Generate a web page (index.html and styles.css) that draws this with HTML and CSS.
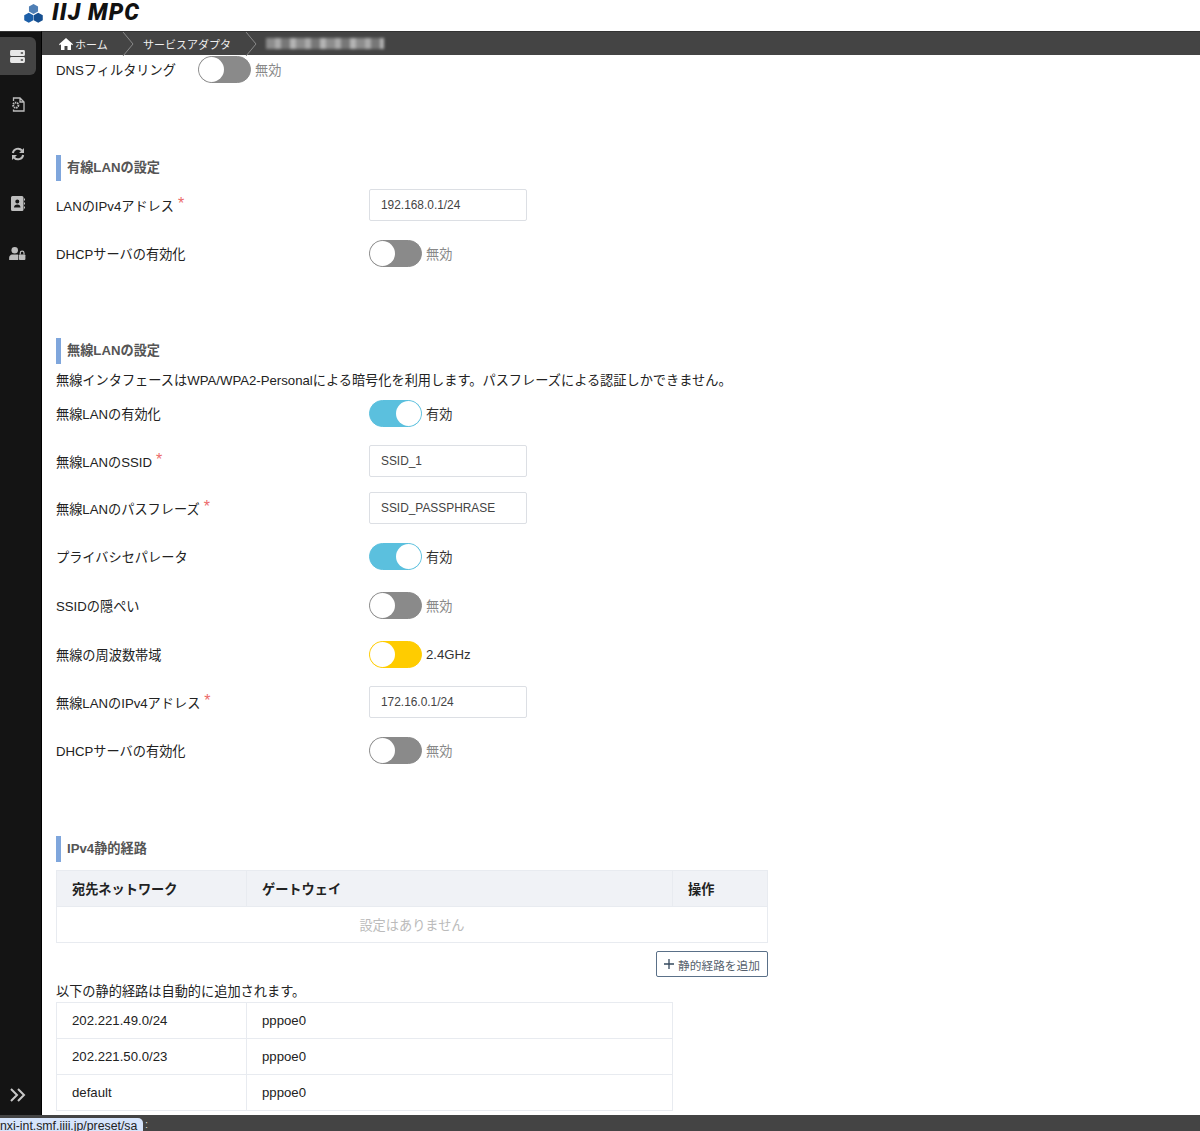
FILE: index.html
```html
<!DOCTYPE html>
<html lang="ja">
<head>
<meta charset="utf-8">
<title>IIJ MPC</title>
<link rel="stylesheet" href="styles.css">
</head>
<body>
<header class="topbar">
  <svg class="logo-mark" viewBox="0 0 22 22" width="21" height="20" aria-hidden="true">
    <path fill="#4f7fb5" d="M11 1l5 2.800v5.600l-5 2.800-5-2.800V3.800z"/>
    <path fill="#1c5fa8" d="M5.800 10.800l5 2.800v5.500l-5 2.700-5-2.700v-5.500z"/>
    <path fill="#164f90" d="M16.200 10.800l5 2.800v5.500l-5 2.700-5-2.700v-5.500z"/>
  </svg>
  <span class="logo-text">IIJ MPC</span>
</header>
<div class="shell">
  <nav class="side">
    <a class="side-item side-active">
      <svg viewBox="0 0 16 14" width="15" height="13"><path fill="#e8e8e8" d="M1.500 0h13A1.500 1.500 0 0 1 16 1.500V5a1.500 1.500 0 0 1-1.500 1.500h-13A1.500 1.500 0 0 1 0 5V1.500A1.500 1.500 0 0 1 1.500 0zm0 7.500h13A1.500 1.500 0 0 1 16 9v3.500a1.500 1.500 0 0 1-1.500 1.500h-13A1.500 1.500 0 0 1 0 12.500V9a1.500 1.500 0 0 1 1.500-1.500z"/><path fill="#444" d="M11.500 2.500h2.500v1.500h-2.500zM11.500 10h2.500v1.500h-2.500z"/></svg>
    </a>
    <a class="side-item">
      <svg viewBox="0 0 14 15" width="14" height="15"><path fill="none" stroke="#bdbdbd" stroke-width="1.300" d="M2.500 4V1h6.500L13 5v9H2.500v-1.500M9 1v4h4"/><circle cx="4.800" cy="8.200" r="2.600" fill="none" stroke="#bdbdbd" stroke-width="1.900" stroke-dasharray="1.500 .7"/></svg>
    </a>
    <a class="side-item">
      <svg viewBox="0 0 14 14" width="14" height="14"><path fill="none" stroke="#bdbdbd" stroke-width="2" d="M1.800 6A5.300 5.300 0 0 1 11 3.500M12.200 8A5.300 5.300 0 0 1 3 10.500"/><path fill="#bdbdbd" d="M13 1v5H8zM1 13V8h5z"/></svg>
    </a>
    <a class="side-item">
      <svg viewBox="0 0 14 15" width="14" height="15"><path fill="#bdbdbd" fill-rule="evenodd" d="M1.500 0h9.500A1.500 1.500 0 0 1 12.500 1.500v12A1.500 1.500 0 0 1 11 15H1.500A1.500 1.500 0 0 1 0 13.500v-12A1.500 1.500 0 0 1 1.500 0zM6.300 3.500a2 2 0 1 0 0 4 2 2 0 0 0 0-4zM3 11.500h6.500c0-2-1.300-3-3.200-3S3 9.500 3 11.500z"/><path fill="#bdbdbd" d="M13 2.500h1v2h-1zM13 6.500h1v2h-1zM13 10.500h1v2h-1z"/></svg>
    </a>
    <a class="side-item">
      <svg viewBox="0 0 18 14" width="17" height="13"><circle cx="6" cy="3.500" r="3.500" fill="#bdbdbd"/><path fill="#bdbdbd" d="M0 14v-2.500C0 9 2 8 4 8h4c1 0 1.500.2 1.800.4V14z"/><path fill="none" stroke="#bdbdbd" stroke-width="1.300" d="M12 8V6.500a2 2 0 0 1 4 0V8"/><path fill="#bdbdbd" d="M11.500 8h5a1 1 0 0 1 1 1v4a1 1 0 0 1-1 1h-5a1 1 0 0 1-1-1V9a1 1 0 0 1 1-1z"/></svg>
    </a>
    <a class="side-expand">
      <svg viewBox="0 0 16 14" width="16" height="14"><path fill="none" stroke="#c8c8c8" stroke-width="2" d="M1 1l6 6-6 6M8 1l6 6-6 6"/></svg>
    </a>
  </nav>
  <div class="main">
    <div class="crumbs">
      <span class="crumb crumb-home">
        <svg viewBox="0 0 14 12" width="14" height="12"><path fill="#fff" d="M7 0l7 6.300-.8.900L12 6.200V12H8.500V8h-3v4H2V6.200L.8 7.200 0 6.300z"/></svg>
        ホーム
      </span>
      <svg class="chev" viewBox="0 0 12 24" width="12" height="24"><path fill="none" stroke="#8a8a8a" d="M1 0l10 12L1 24"/></svg>
      <span class="crumb crumb-service">サービスアダプタ</span>
      <svg class="chev" viewBox="0 0 12 24" width="12" height="24"><path fill="none" stroke="#8a8a8a" d="M1 0l10 12L1 24"/></svg>
      <span class="crumb-blur"></span>
    </div>
    <main class="content">
      <div class="dns-row">
        <span class="dns-label">DNSフィルタリング</span>
        <span class="toggle off"><i></i></span><span class="state">無効</span>
      </div>

      <h2 class="heading h-wired">有線LANの設定</h2>
      <div class="row r-input r-first">
        <label>LANのIPv4アドレス<em>*</em></label>
        <span class="input">192.168.0.1/24</span>
      </div>
      <div class="row r-toggle">
        <label>DHCPサーバの有効化</label>
        <span class="toggle off"><i></i></span><span class="state">無効</span>
      </div>

      <h2 class="heading h-wifi">無線LANの設定</h2>
      <p class="desc">無線インタフェースはWPA/WPA2-Personalによる暗号化を利用します。パスフレーズによる認証しかできません。</p>
      <div class="row r-toggle r-wifi-first">
        <label>無線LANの有効化</label>
        <span class="toggle on"><i></i></span><span class="state active">有効</span>
      </div>
      <div class="row r-input">
        <label>無線LANのSSID<em>*</em></label>
        <span class="input">SSID_1</span>
      </div>
      <div class="row r-input">
        <label>無線LANのパスフレーズ<em>*</em></label>
        <span class="input">SSID_PASSPHRASE</span>
      </div>
      <div class="row r-toggle">
        <label>プライバシセパレータ</label>
        <span class="toggle on"><i></i></span><span class="state active">有効</span>
      </div>
      <div class="row r-toggle">
        <label>SSIDの隠ぺい</label>
        <span class="toggle off"><i></i></span><span class="state">無効</span>
      </div>
      <div class="row r-toggle">
        <label>無線の周波数帯域</label>
        <span class="toggle band"><i></i></span><span class="state active">2.4GHz</span>
      </div>
      <div class="row r-input">
        <label>無線LANのIPv4アドレス<em>*</em></label>
        <span class="input">172.16.0.1/24</span>
      </div>
      <div class="row r-toggle">
        <label>DHCPサーバの有効化</label>
        <span class="toggle off"><i></i></span><span class="state">無効</span>
      </div>

      <h2 class="heading h-routes">IPv4静的経路</h2>
      <table class="grid routes">
        <thead>
          <tr><th class="c1">宛先ネットワーク</th><th class="c2">ゲートウェイ</th><th class="c3">操作</th></tr>
        </thead>
        <tbody>
          <tr><td colspan="3" class="empty">設定はありません</td></tr>
        </tbody>
      </table>
      <div class="add-wrap">
        <button class="add" type="button"><svg viewBox="0 0 10 10" width="10" height="10"><path fill="none" stroke="#35495e" stroke-width="1.300" d="M5 0v10M0 5h10"/></svg>静的経路を追加</button>
      </div>
      <p class="auto-note">以下の静的経路は自動的に追加されます。</p>
      <table class="grid auto">
        <tbody>
          <tr><td class="c1">202.221.49.0/24</td><td>pppoe0</td></tr>
          <tr><td class="c1">202.221.50.0/23</td><td>pppoe0</td></tr>
          <tr><td class="c1">default</td><td>pppoe0</td></tr>
        </tbody>
      </table>
    </main>
  </div>
</div>
<footer class="bottom">
  <span class="url">nxi-int.smf.iiii.jp/preset/sa</span><span class="url-more">:</span>
</footer>
</body>
</html>
```
FILE: styles.css
```css
* { box-sizing: border-box; }
html, body { margin: 0; height: 100%; }
body {
  height: 1131px;
  overflow: hidden;
  display: flex;
  flex-direction: column;
  background: #fff;
  color: #222;
  font-family: "Liberation Sans", "Noto Sans CJK JP", sans-serif;
  font-size: 13.200px;
}
.topbar {
  height: 31px;
  flex: none;
  display: flex;
  align-items: flex-start;
  padding: 2px 0 0 23px;
  background: #fff;
}
.logo-mark { flex: none; margin-top: 1px; }
.logo-text {
  margin-left: 8px;
  font-family: "Roboto", sans-serif;
  font-weight: 900;
  font-style: italic;
  font-size: 23px;
  line-height: 21px;
  letter-spacing: 1.100px;
  color: #111;
}
.shell { flex: 1; display: flex; min-height: 0; }
.side {
  width: 42px;
  flex: none;
  background: #141414;
  border-top: 1px solid #333;
  display: flex;
  flex-direction: column;
  align-items: center;
  padding-top: 5px;
  border-right: 1px solid #000;
}
.side-item {
  width: 36px;
  height: 38px;
  margin-bottom: 11.500px;
  margin-left: -6px;
  display: flex;
  align-items: center;
  justify-content: center;
  border-radius: 0 6px 6px 0;
}
.side-active { background: #444; margin-bottom: 10.500px; }
.side-expand { margin-top: auto; margin-bottom: 13px; margin-left: -6px; display: flex; }
.main { flex: 1; min-width: 0; display: flex; flex-direction: column; }
.crumbs {
  height: 24px;
  flex: none;
  display: flex;
  align-items: center;
  background: #444;
  border-top: 1px solid #333;
  color: #fff;
  font-size: 11px;
}
.crumb { display: flex; align-items: center; color: #eee; }
.crumb-home { margin-left: 17px; gap: 2px; width: 63px; }
.chev { flex: none; }
.crumb-service { margin-left: 9px; width: 102px; }
.crumb-blur {
  width: 118px;
  height: 11px;
  margin-left: 9px;
  background: repeating-linear-gradient(90deg, #8c8c8c 0 9px, #aaa 9px 15px, #777 15px 24px, #b4b4b4 24px 30px);
  filter: blur(1.500px);
}
.content { flex: 1; padding: 0 0 0 14px; min-height: 0; }
.dns-row { display: flex; align-items: center; height: 28px; }
.dns-label { width: 142px; }
.toggle {
  position: relative;
  display: block;
  flex: none;
  width: 53px;
  height: 27px;
  border-radius: 14px;
  background: #8a8a8a;
  border: 1px solid #8a8a8a;
}
.toggle i {
  position: absolute;
  top: 0;
  width: 25px;
  height: 25px;
  border-radius: 50%;
  background: #fff;
}
.toggle.off i { left: 0; }
.toggle.on { background: #5bc0de; border-color: #5bc0de; }
.toggle.on i { right: 0; }
.toggle.band { background: #ffcc00; border-color: #ffcc00; }
.toggle.band i { left: 0; }
.state { margin-left: 4px; color: #888; }
.state.active { color: #333; }
.heading {
  margin: 0;
  height: 26px;
  line-height: 26px;
  padding-left: 6px;
  border-left: 5px solid #7fa6dc;
  font-size: 13.200px;
  font-weight: bold;
  color: #555;
}
.h-wired { margin-top: 72px; }
.h-wifi { margin-top: 68px; }
.h-routes { margin-top: 69px; }
.row { display: flex; align-items: center; margin-top: 15px; }
.r-first { margin-top: 8px; }
.r-input { height: 32px; }
.r-toggle { height: 34px; }
.r-wifi-first { margin-top: 7px; }
.row label { width: 313px; flex: none; }
.row em {
  font-style: normal;
  color: #ec6a6a;
  font-size: 16px;
  line-height: 1;
  margin-left: 4px;
  position: relative;
  top: -2px;
}
.input {
  width: 158px;
  height: 32px;
  line-height: 30px;
  padding-left: 11.500px;
  margin-left: -0.500px;
  border: 1.500px solid #dcdfe4;
  border-radius: 2px;
  font-size: 11.900px;
  color: #444;
}
.desc { margin: 8px 0 0; height: 17px; line-height: 17px; }
.grid { border-collapse: collapse; table-layout: fixed; }
.grid th, .grid td {
  border: 1.500px solid #e8ebf0;
  padding: 0 15px;
  text-align: left;
}
.routes { width: 712px; margin-top: 8px; }
.routes th { height: 36px; background: #f0f2f6; font-size: 13.200px; color: #222; }
.routes .c1 { width: 190px; }
.routes .c3 { width: 95px; }
.routes td { height: 36px; }
.routes .empty { text-align: center; color: #bbb; }
.add-wrap { width: 712px; margin-top: 8px; display: flex; justify-content: flex-end; }
.add {
  height: 26px;
  width: 112px;
  padding: 0;
  display: flex;
  align-items: center;
  justify-content: center;
  gap: 4px;
  background: #fff;
  border: 1.500px solid #5a7088;
  border-radius: 2px;
  color: #555f6c;
  font-family: inherit;
  font-size: 11.700px;
}
.auto-note { margin: 6px 0 0; height: 17px; line-height: 17px; }
.auto { width: 617px; margin-top: 2px; }
.auto td { height: 36px; }
.auto .c1 { width: 190px; }
.bottom {
  position: relative;
  height: 16px;
  flex: none;
  background: #444;
}
.url {
  position: absolute;
  left: -2px;
  top: 3px;
  width: 145px;
  height: 13px;
  line-height: 17px;
  padding-left: 2px;
  overflow: hidden;
  white-space: nowrap;
  background: #d6e4fb;
  border-radius: 0 5px 0 0;
  font-size: 12.300px;
  color: #222;
}
.url-more {
  position: absolute;
  left: 145px;
  top: 2px;
  font-size: 11px;
  line-height: 14px;
  color: #ddd;
}
```
